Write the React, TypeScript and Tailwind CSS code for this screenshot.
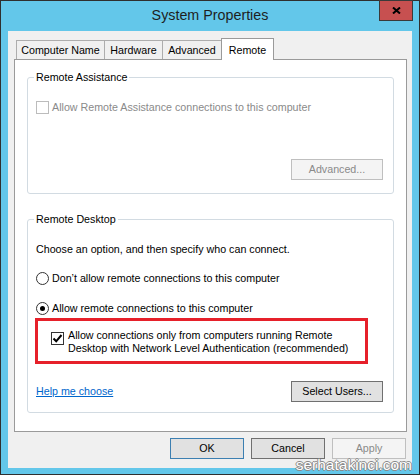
import React from "react"

const tabs = [
  { label: "Computer Name", width: "w-[89px]" },
  { label: "Hardware", width: "w-[59px]" },
  { label: "Advanced", width: "w-[60px]" },
]

function CheckBox({ checked, disabled }: { checked?: boolean; disabled?: boolean }) {
  return (
    <span
      className={`flex h-[13px] w-[13px] shrink-0 items-center justify-center border bg-white ${
        disabled ? "border-[#bcbcbc]" : "border-[#333333]"
      }`}
    >
      {checked && (
        <svg width="11" height="11" viewBox="0 0 11 11">
          <path d="M1.5 5.5 L4.2 8.3 L9.5 2" fill="none" stroke="#000" strokeWidth="2" />
        </svg>
      )}
    </span>
  )
}

function Radio({ checked }: { checked?: boolean }) {
  return (
    <span className="flex h-[13px] w-[13px] shrink-0 items-center justify-center rounded-full border border-[#333333] bg-white">
      {checked && <span className="h-[5px] w-[5px] rounded-full bg-black" />}
    </span>
  )
}

function Button({
  children,
  variant = "normal",
  className = "",
}: {
  children: React.ReactNode
  variant?: "normal" | "default" | "disabled"
  className?: string
}) {
  const styles = {
    normal: "border-[#707070] bg-[#e1e1e1] text-black",
    default: "border-[#3c7fb1] bg-[#e1e1e1] text-black",
    disabled: "border-[#bfbfbf] bg-[#f4f4f4] text-[#8a8a8a]",
  }
  return (
    <div className={`flex h-[21px] items-center justify-center border ${styles[variant]} ${className}`}>
      {children}
    </div>
  )
}

export default function App() {
  return (
    <div className="relative flex h-[475px] w-[420px] flex-col border border-[#2f2f2f] bg-[#63c7ea] font-['Liberation_Sans',Arial,sans-serif] text-[10.7px] text-black">
      {/* Title bar */}
      <div className="flex h-[30px] shrink-0 items-center justify-center">
        <span className="text-[14.3px] text-[#1e1e1e]">System Properties</span>
      </div>
      <div className="absolute right-[6px] top-[-1px] flex h-[21px] w-[34px] items-center justify-center border border-[#3a3a3a] bg-[#c75050]">
        <svg width="9" height="7" viewBox="0 0 9 7">
          <path d="M1 0.5 L8 6.5 M8 0.5 L1 6.5" stroke="#000" strokeWidth="2" />
        </svg>
      </div>

      {/* Client area */}
      <div className="mx-[7px] flex h-[437px] flex-col bg-[#f0f0f0] pt-[7px]">
        {/* Tabs */}
        <div className="ml-[8px] flex items-end">
          {tabs.map((tab, i) => (
            <div
              key={tab.label}
              className={`flex h-[19px] items-center justify-center border border-b-0 border-[#adadad] bg-[#f0f0f0] ${tab.width} ${
                i > 0 ? "-ml-px" : ""
              }`}
            >
              {tab.label}
            </div>
          ))}
          <div className="relative z-10 -mb-px -ml-px flex h-[22px] w-[53px] items-start justify-center border border-b-0 border-[#9a9a9a] bg-white pt-[3px]">
            Remote
          </div>
        </div>

        {/* Panel */}
        <div className="ml-[6px] mr-[5px] flex h-[373px] flex-col border border-[#9a9a9a] bg-white px-[12px] pt-[10px]">
          {/* Remote Assistance */}
          <fieldset className="rounded-[3px] border border-[#d2dbe2]">
            <legend className="ml-[6px] px-[2px] leading-[14px]">Remote Assistance</legend>
            <div className="flex flex-col pb-[13px] pl-[8px] pr-[10px] pt-[16px]">
              <div className="flex h-[14px] items-center gap-[3px] text-[#8a8a8a]">
                <CheckBox disabled />
                <span>Allow Remote Assistance connections to this computer</span>
              </div>
              <div className="mt-[45px] flex justify-end">
                <Button variant="disabled" className="w-[92px]">
                  Advanced...
                </Button>
              </div>
            </div>
          </fieldset>

          {/* Remote Desktop */}
          <fieldset className="mt-[18px] rounded-[3px] border border-[#d2dbe2]">
            <legend className="ml-[6px] px-[2px] leading-[14px]">Remote Desktop</legend>
            <div className="flex flex-col pb-[10px] pl-[8px] pr-[10px] pt-[16px]">
              <p className="leading-[14px]">Choose an option, and then specify who can connect.</p>
              <div className="mt-[15px] flex h-[14px] items-center gap-[3px]">
                <Radio />
                <span>Don’t allow remote connections to this computer</span>
              </div>
              <div className="mt-[16px] flex h-[14px] items-center gap-[3px]">
                <Radio checked />
                <span>Allow remote connections to this computer</span>
              </div>
              <div className="-ml-px mt-[3px] flex w-[333px] items-start gap-[4px] border-[3px] border-[#e6202a] pb-[6px] pl-[13px] pt-[8px]">
                <div className="mt-[3px]">
                  <CheckBox checked />
                </div>
                <p className="leading-[13px]">
                  Allow connections only from computers running Remote
                  <br />
                  Desktop with Network Level Authentication (recommended)
                </p>
              </div>
              <div className="mt-[17px] flex items-center justify-between">
                <span className="text-[#0066cc] underline">Help me choose</span>
                <Button className="w-[92px]">Select Users...</Button>
              </div>
            </div>
          </fieldset>
        </div>

        {/* Dialog buttons */}
        <div className="mr-[6px] mt-[6px] flex justify-end gap-[7px]">
          <Button variant="default" className="w-[74px]">
            OK
          </Button>
          <Button className="w-[74px]">Cancel</Button>
          <Button variant="disabled" className="w-[74px]">
            Apply
          </Button>
        </div>
      </div>

      {/* Watermark */}
      <span className="absolute bottom-[2px] right-[7px] text-[15.5px] leading-none text-white [text-shadow:1px_0_0_#8a8a8a,-1px_0_0_#8a8a8a,0_1px_0_#8a8a8a,0_-1px_0_#8a8a8a]">
        serhatakinci.com
      </span>
    </div>
  )
}
